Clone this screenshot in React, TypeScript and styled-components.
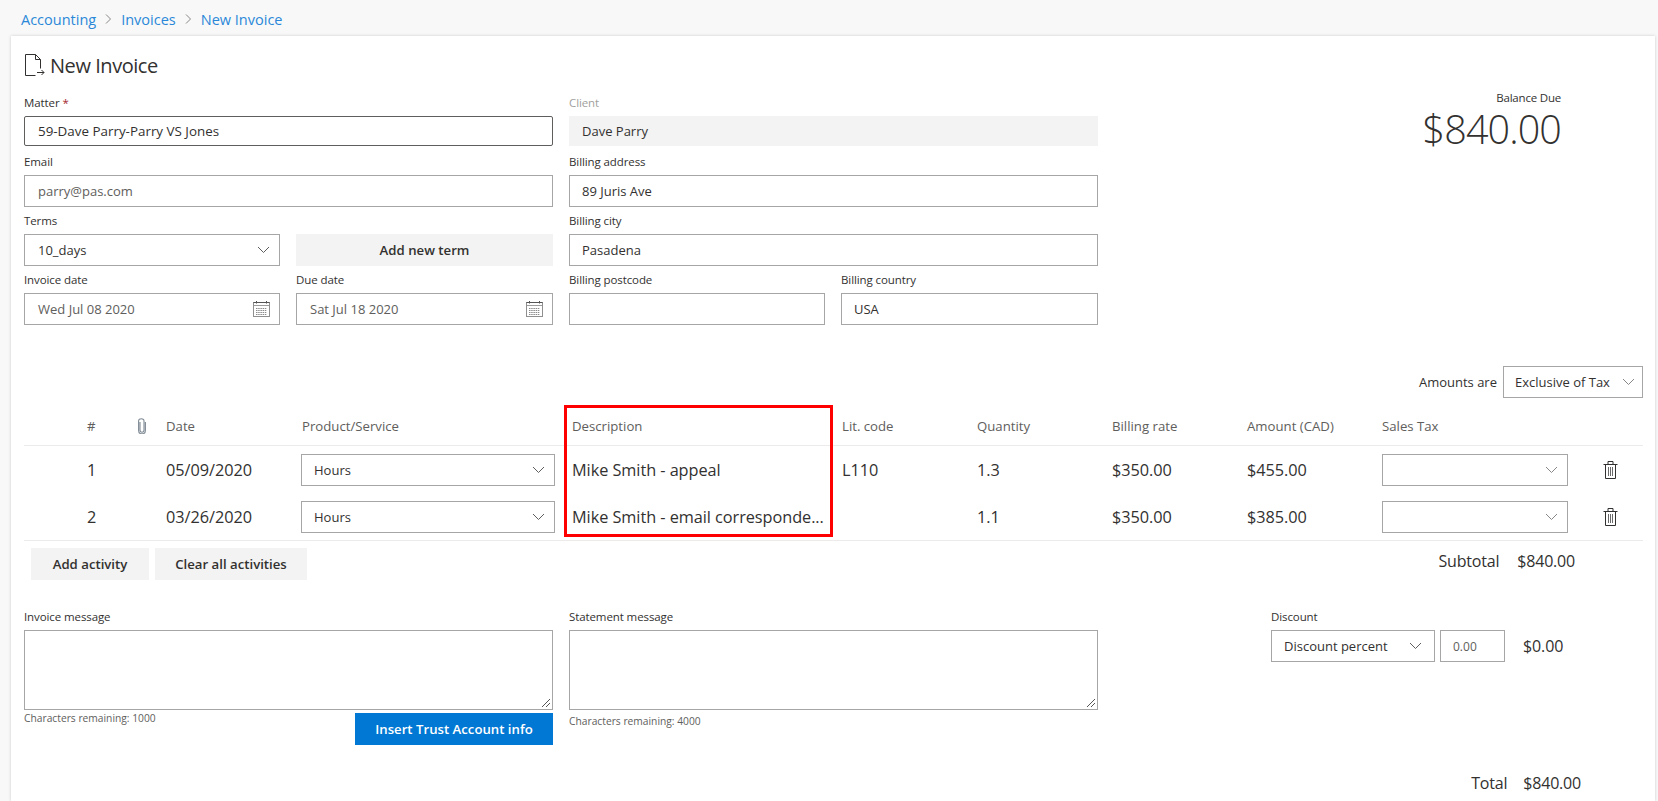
import React from "react";
import styled, { createGlobalStyle } from "styled-components";

const Global = createGlobalStyle`
  html, body { margin: 0; padding: 0; background: #f8f8f8; }
  body { font-family: "Open Sans", "Noto Sans", sans-serif; color: #323130; overflow: hidden; }
  * { box-sizing: border-box; }
`;

const Page = styled.div`
  width: 1658px; height: 801px; overflow: hidden; display: flex; flex-direction: column;
`;
const Crumbs = styled.nav`
  height: 36px; display: flex; align-items: center; padding: 2px 0 0 21px; gap: 9px;
  font-size: 14.5px; color: #2b88d8;
`;
const Sep = styled.span`display: flex; color: #8a8886;`;
const Card = styled.main`
  flex: 1; margin: 0 3px 0 11px; background: #fff; padding: 12px 12px 0 13px;
  box-shadow: 0 0 3px rgba(0,0,0,.18); display: flex; flex-direction: column;
`;
const TitleRow = styled.h1`
  margin: 0; height: 34px; display: flex; align-items: center; gap: 5px;
  font-size: 20px; font-weight: 400; letter-spacing: -0.45px; color: #323130;
`;
const Top = styled.section`
  display: grid; grid-template-columns: 529px 529px 1fr; column-gap: 16px; margin-top: 11px;
`;
const Stack = styled.div`display: flex; flex-direction: column;`;
const Two = styled.div`display: grid; grid-template-columns: 256px 257px; column-gap: 16px; align-items: end;`;
const Field = styled.div<{ $pb?: number }>`
  display: flex; flex-direction: column; padding-bottom: ${p => p.$pb ?? 4}px;
`;
const Label = styled.label<{ $muted?: boolean }>`
  display: block; height: 23px; line-height: 19px; font-size: 11.5px; letter-spacing: -0.1px;
  color: ${p => (p.$muted ? "#a19f9d" : "#323130")};
`;
const Req = styled.span`color: #a4262c;`;
const Box = styled.div<{ $h?: number; $dark?: boolean; $off?: boolean; $soft?: boolean }>`
  height: ${p => p.$h ?? 32}px; display: flex; align-items: center; justify-content: space-between;
  padding: 0 9px 0 12px; font-size: ${p => (p.$dark ? 13.4 : 13)}px; white-space: nowrap;
  color: ${p => (p.$soft ? "#605e5c" : "#323130")};
  background: ${p => (p.$off ? "#f3f3f3" : "#fff")};
  border: 1px solid ${p => (p.$off ? "#f3f3f3" : p.$dark ? "#605e5c" : "#a6a6a6")};
  border-radius: ${p => (p.$dark ? 2 : 0)}px;
`;
const LeftStack = styled(Stack)`
  ${Box} { padding-left: 13px; }
`;
const Button = styled.button<{ $primary?: boolean }>`
  height: 32px; border: 0; padding: 0; font: 600 13.2px "Open Sans", sans-serif;
  color: ${p => (p.$primary ? "#fff" : "#323130")};
  background: ${p => (p.$primary ? "#0078d4" : "#f3f3f3")};
`;
const AddTerm = styled(Button)`margin-bottom: 4px;`;
const Balance = styled.div`
  display: flex; flex-direction: column; align-items: flex-end; padding: 0 82px 0 0; margin-top: -3px;
`;
const BalanceLabel = styled.div`font-size: 11.5px; letter-spacing: -0.2px; line-height: 16px;`;
const BalanceValue = styled.div`
  font-size: 39.5px; font-weight: 300; line-height: 46px; letter-spacing: -0.9px; color: #323130;
`;
const AmountsRow = styled.div`
  display: flex; justify-content: flex-end; align-items: center; gap: 6px; margin-top: 37px;
  font-size: 13px;
`;
const AmountsSelect = styled(Box)`width: 140px; padding: 0 7px 0 11px;`;
const Table = styled.section`position: relative;`;
const GridRow = styled.div<{ $h: number; $line?: boolean; $pt?: number }>`
  display: grid; height: ${p => p.$h}px; align-items: center; padding-top: ${p => p.$pt ?? 0}px;
  grid-template-columns: 63px 50px 29px 136px 270px 270px 135px 135px 135px 135px 186px 1fr;
  border-bottom: ${p => (p.$line ? "1px solid #edebe9" : "0")};
`;
const Th = styled.div`font-size: 13.2px; color: #605e5c;`;
const Td = styled.div`font-size: 16.3px; color: #323130; letter-spacing: -0.05px; white-space: nowrap;`;
const RowBox = styled(Box)`margin-right: 17px; margin-left: -1px;`;
const TaxBox = styled(Box)`margin: 0;`;
const IconCell = styled.div`display: flex; justify-content: center; padding-left: 10px;`;
const ClipCell = styled.div`display: flex;`;
const Highlight = styled.div`
  position: absolute; left: 540px; top: 7px; width: 269px; height: 132px; border: 3px solid #f00; pointer-events: none;
`;
const Actions = styled.div`display: flex; justify-content: space-between; align-items: flex-start; margin-top: 7px;`;
const ActionButtons = styled.div`display: flex; gap: 6px; padding-left: 7px;`;
const SubButton = styled(Button)<{ $w: number }>`width: ${p => p.$w}px;`;
const Sum = styled.div<{ $gap: number; $right: number; $size: number; $strong?: boolean }>`
  display: flex; gap: ${p => p.$gap}px; padding-right: ${p => p.$right}px; font-size: ${p => p.$size}px;
  letter-spacing: -0.2px; line-height: 26px; font-weight: ${p => (p.$strong ? 500 : 400)};
`;
const Bottom = styled.section`
  display: grid; grid-template-columns: 529px 529px 1fr; column-gap: 16px; margin-top: 27px;
`;
const AreaBox = styled.div`
  height: 80px; border: 1px solid #a6a6a6; position: relative;
`;
const Grip = styled.svg`position: absolute; right: 1px; bottom: 1px;`;
const Under = styled.div`display: flex; justify-content: space-between; align-items: flex-start;`;
const Hint = styled.div<{ $top: number }>`font-size: 10.25px; color: #605e5c; line-height: 14px; margin-top: ${p => p.$top}px;`;
const TrustButton = styled(Button)`width: 198px; margin-top: 3px;`;
const DiscountCol = styled.div`padding-left: 157px;`;
const DiscountRow = styled.div`display: flex; align-items: center;`;
const DiscountSelect = styled(Box)`width: 164px; padding: 0 12px;`;
const DiscountInput = styled(Box)`width: 65px; margin-left: 5px; font-size: 12px; color: #605e5c;`;
const DiscountValue = styled.div`margin-left: 18px; font-size: 16px; letter-spacing: -0.1px;`;
const TotalRow = styled.div`display: flex; justify-content: flex-end; margin-top: 25px;`;

const Chevron = ({ muted }: { muted?: boolean }) => (
  <svg width="13" height="8" viewBox="0 0 13 8" fill="none" stroke={muted ? "#8a8886" : "#605e5c"} strokeWidth="1"><path d="M1 1l5.5 5.5L12 1" /></svg>
);
const CrumbChevron = () => (
  <svg width="7" height="12" viewBox="0 0 7 12" fill="none" stroke="currentColor" strokeWidth="1"><path d="M1 1.5 5.5 6 1 10.5" /></svg>
);
const Calendar = () => (
  <svg width="17" height="16" viewBox="0 0 17 16" fill="none">
    <rect x="0.5" y="1.5" width="16" height="14" fill="#fff" stroke="#8f8f8f" />
    <path d="M.5 1.5h16" stroke="#555" />
    <path d="M1 4.5h15" stroke="#9c9c9c" />
    <path d="M3.5 0v2.5M13.5 0v2.5" stroke="#555" />
    <path d="M3 7.5h11M3 9.5h11M3 11.5h11M3 13.5h11" stroke="#8a8a8a" strokeDasharray="1.5 .7" />
  </svg>
);
const DocIcon = () => (
  <svg width="21" height="23" viewBox="0 0 21 23" fill="none" stroke="#323130" strokeWidth="1">
    <path d="M11.5 21.5H1.5V.5h10l5 5v9M11.5.5v5h5" />
    <path d="M13 18.5h7M17.5 16l2.5 2.5-2.5 2.5" />
  </svg>
);
const Clip = () => (
  <svg width="10" height="16" viewBox="0 0 10 16" fill="none" stroke="#7f8a94" strokeWidth="1.1"><path d="M3 4v8c0 3 4 3 4 0V3C7 0 1.6 0 1.6 3v9.5c0 4.5 6.8 4.5 6.8 0V4" /></svg>
);
const Trash = () => (
  <svg width="15" height="18" viewBox="0 0 15 18" fill="none" stroke="#323130" strokeWidth="1">
    <path d="M.5 3.5h14M5 3.5v-3h5v3M2.5 3.5v14h10v-14" />
    <path d="M5.5 6v9M7.5 6v9M9.5 6v9" stroke="#6a6a6a" />
  </svg>
);

const App = () => (
  <Page>
    <Global />
    <Crumbs>
      <span>Accounting</span><Sep><CrumbChevron /></Sep>
      <span>Invoices</span><Sep><CrumbChevron /></Sep>
      <span>New Invoice</span>
    </Crumbs>
    <Card>
      <TitleRow><DocIcon />New Invoice</TitleRow>
      <Top>
        <LeftStack>
          <Field $pb={6}><Label>Matter <Req>*</Req></Label><Box $h={30} $dark>59-Dave Parry-Parry VS Jones</Box></Field>
          <Field><Label>Email</Label><Box $soft>parry@pas.com</Box></Field>
          <Two>
            <Field><Label>Terms</Label><Box>10_days<Chevron /></Box></Field>
            <AddTerm>Add new term</AddTerm>
          </Two>
          <Two>
            <Field><Label>Invoice date</Label><Box $soft>Wed Jul 08 2020<Calendar /></Box></Field>
            <Field><Label>Due date</Label><Box $soft>Sat Jul 18 2020<Calendar /></Box></Field>
          </Two>
        </LeftStack>
        <Stack>
          <Field $pb={6}><Label $muted>Client</Label><Box $h={30} $off>Dave Parry</Box></Field>
          <Field><Label>Billing address</Label><Box>89 Juris Ave</Box></Field>
          <Field><Label>Billing city</Label><Box>Pasadena</Box></Field>
          <Two>
            <Field><Label>Billing postcode</Label><Box /></Field>
            <Field><Label>Billing country</Label><Box>USA</Box></Field>
          </Two>
        </Stack>
        <Balance>
          <BalanceLabel>Balance Due</BalanceLabel>
          <BalanceValue>$840.00</BalanceValue>
        </Balance>
      </Top>
      <AmountsRow>Amounts are<AmountsSelect>Exclusive of Tax<Chevron muted /></AmountsSelect></AmountsRow>
      <Table>
        <GridRow $h={48} $pt={8} $line>
          <span /><Th>#</Th><ClipCell><Clip /></ClipCell><Th>Date</Th><Th>Product/Service</Th><Th>Description</Th><Th>Lit. code</Th><Th>Quantity</Th><Th>Billing rate</Th><Th>Amount (CAD)</Th><Th>Sales Tax</Th><span />
        </GridRow>
        <GridRow $h={47}>
          <span /><Td>1</Td><span /><Td>05/09/2020</Td><RowBox>Hours<Chevron /></RowBox><Td>Mike Smith - appeal</Td><Td>L110</Td><Td>1.3</Td><Td>$350.00</Td><Td>$455.00</Td><TaxBox><span /><Chevron muted /></TaxBox><IconCell><Trash /></IconCell>
        </GridRow>
        <GridRow $h={48} $line>
          <span /><Td>2</Td><span /><Td>03/26/2020</Td><RowBox>Hours<Chevron /></RowBox><Td>Mike Smith - email corresponde...</Td><span /><Td>1.1</Td><Td>$350.00</Td><Td>$385.00</Td><TaxBox><span /><Chevron muted /></TaxBox><IconCell><Trash /></IconCell>
        </GridRow>
        <Highlight />
      </Table>
      <Actions>
        <ActionButtons>
          <SubButton $w={118}>Add activity</SubButton>
          <SubButton $w={152}>Clear all activities</SubButton>
        </ActionButtons>
        <Sum $gap={18} $right={68} $size={16}><span>Subtotal</span><span>$840.00</span></Sum>
      </Actions>
      <Bottom>
        <Field $pb={0}>
          <Label>Invoice message</Label>
          <AreaBox><Grip width="12" height="12" viewBox="0 0 12 12" stroke="#555"><path d="M3 11 11 3M7 11l4-4" /></Grip></AreaBox>
          <Under>
            <Hint $top={1}>Characters remaining: 1000</Hint>
            <TrustButton $primary>Insert Trust Account info</TrustButton>
          </Under>
        </Field>
        <Field $pb={0}>
          <Label>Statement message</Label>
          <AreaBox><Grip width="12" height="12" viewBox="0 0 12 12" stroke="#555"><path d="M3 11 11 3M7 11l4-4" /></Grip></AreaBox>
          <Hint $top={4}>Characters remaining: 4000</Hint>
        </Field>
        <DiscountCol>
          <Label>Discount</Label>
          <DiscountRow>
            <DiscountSelect>Discount percent<Chevron /></DiscountSelect>
            <DiscountInput>0.00</DiscountInput>
            <DiscountValue>$0.00</DiscountValue>
          </DiscountRow>
        </DiscountCol>
      </Bottom>
      <TotalRow><Sum $gap={16} $right={62} $size={16} $strong><span>Total</span><span>$840.00</span></Sum></TotalRow>
    </Card>
  </Page>
);

export default App;
